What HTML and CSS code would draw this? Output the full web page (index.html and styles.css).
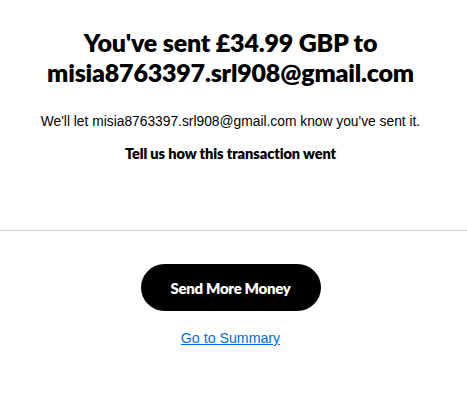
FILE: index.html
```html
<!DOCTYPE html>
<html>
<head>
<meta charset="utf-8">
<link rel="stylesheet" href="styles.css">
</head>
<body>
<main class="page">
  <section class="summary">
    <h1 class="title">You've sent £34.99 GBP to misia8763397.srl908@gmail.com</h1>
    <p class="note">We'll let misia8763397.srl908@gmail.com know you've sent it.</p>
    <p class="feedback">Tell us how this transaction went</p>
  </section>
  <hr class="divider">
  <section class="actions">
    <button class="primary">Send More Money</button>
    <a class="link" href="#">Go to Summary</a>
  </section>
</main>
</body>
</html>
```
FILE: styles.css
```css
html, body {
  margin: 0;
  padding: 0;
  background: #fff;
}
body {
  font-family: "Lato", "Helvetica Neue", Arial, sans-serif;
  color: #000;
}
.page {
  display: flex;
  flex-direction: column;
}
.summary {
  display: flex;
  flex-direction: column;
  align-items: center;
  padding: 27px 26px 0 20px;
  text-align: center;
}
.title {
  margin: 0;
  width: 420px;
  font-size: 25px;
  line-height: 30px;
  font-weight: 800;
  letter-spacing: -0.2px;
}
.note {
  margin: 26px 0 0;
  font-family: "Liberation Sans", Arial, sans-serif;
  font-size: 13.8px;
  line-height: 18px;
}
.feedback {
  margin: 14px 0 0;
  font-size: 14.6px;
  line-height: 18px;
  font-weight: 800;
  letter-spacing: -0.1px;
}
.divider {
  margin: 67px 0 0;
  border: 0;
  border-top: 1px solid #cfcfcf;
  height: 0;
}
.actions {
  display: flex;
  flex-direction: column;
  align-items: center;
  padding: 33px 6px 0 0;
}
.primary {
  width: 180px;
  height: 47px;
  border: 0;
  border-radius: 24px;
  background: #000;
  color: #fff;
  font-family: "Lato", Arial, sans-serif;
  font-size: 15px;
  font-weight: 800;
  letter-spacing: -0.3px;
}
.link {
  margin-top: 18px;
  font-family: "Liberation Sans", Arial, sans-serif;
  font-size: 14.2px;
  line-height: 18px;
  color: #0070e0;
  text-decoration: underline;
}
```
